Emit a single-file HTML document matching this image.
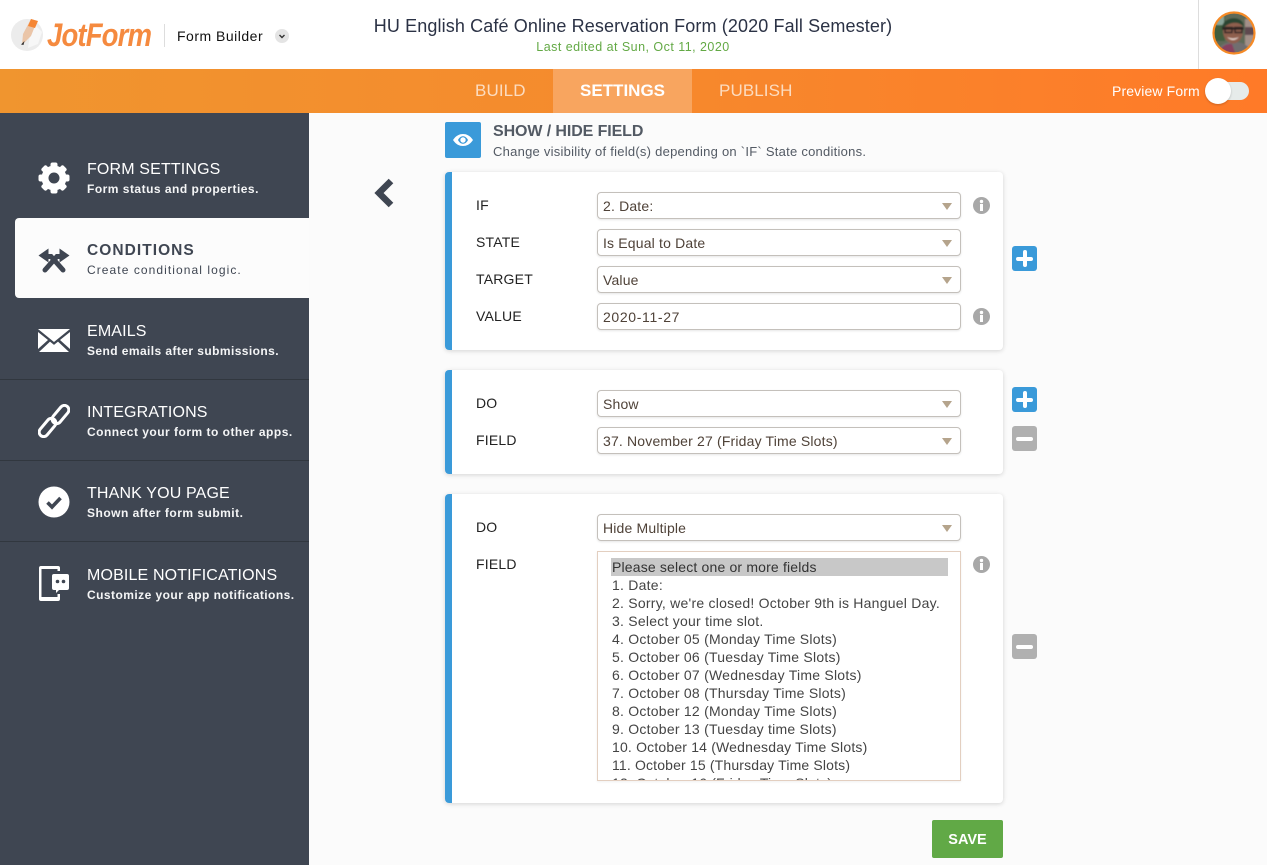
<!DOCTYPE html>
<html><head><meta charset="utf-8"><style>
html,body{margin:0;padding:0}
body{width:1267px;height:865px;position:relative;overflow:hidden;background:#fbfbfb;font-family:"Liberation Sans",sans-serif;color:#333}
.a{position:absolute;white-space:nowrap}
.card{position:absolute;left:445px;width:558px;background:#fff;border-radius:4px;box-shadow:0 1px 5px rgba(0,0,0,.16)}
.bar{position:absolute;left:445px;width:7px;background:#3a9ad9;border-radius:4px 0 0 4px}
.f{position:absolute;left:597px;width:364px;height:27px;box-sizing:border-box;background:#fff;border:1px solid #c4c0bb;border-radius:4px;box-shadow:0 1px 2px rgba(0,0,0,.1);font-size:14px;letter-spacing:.17px;line-height:27px;padding-left:5px;color:#4f4238}
.f.s:after{content:"";position:absolute;right:8px;top:10px;border-left:5px solid transparent;border-right:5px solid transparent;border-top:7px solid #b5a48c}
.l{position:absolute;left:476px;font-size:14px;letter-spacing:.2px;line-height:20px;color:#222}
.i{position:absolute;left:973px}
.b{position:absolute;left:1012px;width:25px;height:25px;border-radius:3px}
.b.p{background:#3a9ad9}.b.m{background:#b0b0b0}
.b:before{content:"";position:absolute;left:4px;top:10.5px;width:17px;height:4px;background:#fff;border-radius:2px}
.b.p:after{content:"";position:absolute;left:10.5px;top:4px;width:4px;height:17px;background:#fff;border-radius:2px}
.nt{position:absolute;left:87px;font-size:16px;letter-spacing:.15px;line-height:20px;color:#fff;white-space:nowrap}
.ns{position:absolute;left:87px;font-size:12px;font-weight:bold;letter-spacing:.49px;line-height:16px;color:#f4f5f6;white-space:nowrap}
.o{position:absolute;left:613px;font-size:14px;letter-spacing:.24px;line-height:18px;color:#444;white-space:nowrap}
.sep{position:absolute;left:0;width:309px;height:1px;background:#31373f}
</style></head><body>
<div class="a" style="left:0;top:0;width:1267px;height:69px;background:#fff"></div>
<svg class="a" style="left:10px;top:18px" width="34" height="34" viewBox="0 0 34 34"><circle cx="17" cy="17" r="16" fill="#ececec"/><path d="M22 4 32 14 28 26 18 30Z" fill="#f7f7f7"/><path d="M21 1 27 3 21 18 12 27 13 16Z" fill="#eac5a8"/><path d="M21 1 28 3 25 10 18 8Z" fill="#f58634"/><path d="M13.5 23 12.5 27 10 26.5Z" fill="#333" transform="translate(1 0)"/></svg>
<div class="a" style="left:47px;top:14px;font-size:32px;line-height:42px;font-weight:bold;font-style:italic;color:#f58a3f;letter-spacing:-1px;transform:scaleX(.86);transform-origin:0 0">JotForm</div>
<div class="a" style="left:164px;top:24px;width:1px;height:23px;background:#ddd"></div>
<div class="a" style="left:177px;top:26px;font-size:14px;line-height:20px;letter-spacing:.5px;color:#111">Form Builder</div>
<div class="a" style="left:275px;top:29px;width:14px;height:14px;border-radius:50%;background:#e4e4e4"></div>
<svg class="a" style="left:275px;top:29px" width="14" height="14"><path d="M4.500 6 7 8.500 9.500 6" fill="none" stroke="#333" stroke-width="1.400"/></svg>
<div class="a" style="left:334px;top:15px;width:598px;text-align:center;font-size:18px;line-height:22px;color:#2b3245;letter-spacing:.12px">HU English Café Online Reservation Form (2020 Fall Semester)</div>
<div class="a" style="left:334px;top:39px;width:598px;text-align:center;font-size:12.500px;line-height:16px;color:#63a945;letter-spacing:.47px">Last edited at Sun, Oct 11, 2020</div>
<div class="a" style="left:1198px;top:0;width:1px;height:69px;background:#ddd"></div>
<svg class="a" style="left:1212px;top:11px" width="44" height="44" viewBox="0 0 44 44"><defs><clipPath id="c"><circle cx="22" cy="22" r="20"/></clipPath><filter id="bl"><feGaussianBlur stdDeviation=".7"/></filter></defs><g clip-path="url(#c)"><g filter="url(#bl)"><rect width="44" height="44" fill="#5f6a58"/><rect x="0" y="0" width="13" height="30" fill="#3f5b3c"/><rect x="4" y="4" width="8" height="10" fill="#8aa59a"/><rect x="33" y="8" width="11" height="28" fill="#a39089"/><rect x="33" y="16" width="11" height="8" fill="#5e4a50"/><path d="M4 44C6 34 14 31 22 31S38 34 40 44Z" fill="#716e70"/><path d="M6 44C8 36 14 32 20 33L24 44Z" fill="#87405f"/><ellipse cx="21" cy="20" rx="10" ry="12.500" fill="#8f5f4d"/><path d="M10 18C9 5 32 3 32 16 27 10 18 10 10 18Z" fill="#2b4530"/><path d="M13 16.500h7v5h-7zM23 16.500h7v5h-7zM11 17h20v1H11z" fill="none" stroke="#2a2023" stroke-width="1.400"/><path d="M15 26q6 3 12 0q-6 6-12 0" fill="#ead8d0"/></g></g><circle cx="22" cy="22" r="20.500" fill="none" stroke="#f58a26" stroke-width="2.200"/></svg>
<div class="a" style="left:0;top:69px;width:1267px;height:44px;background:linear-gradient(90deg,#f0952f 0%,#f58b2d 45%,#ff7a28 100%)"></div>
<div class="a" style="left:553px;top:69px;width:139px;height:44px;background:#f8a55f"></div>
<div class="a" style="left:475px;top:81px;font-size:17px;line-height:20px;color:#fcdcc0;letter-spacing:.1px">BUILD</div>
<div class="a" style="left:580px;top:81px;font-size:17px;line-height:20px;color:#fff;letter-spacing:0;font-weight:bold">SETTINGS</div>
<div class="a" style="left:719px;top:81px;font-size:17px;line-height:20px;color:#fcdcc0;letter-spacing:.1px">PUBLISH</div>
<div class="a" style="left:1112px;top:81px;font-size:14px;line-height:20px;color:#fff;letter-spacing:.12px">Preview Form</div>
<div class="a" style="left:1207px;top:82px;width:42px;height:18px;border-radius:9px;background:#e6ebea"></div>
<div class="a" style="left:1205px;top:78px;width:26px;height:26px;border-radius:50%;background:#fff;box-shadow:0 1px 2px rgba(0,0,0,.2)"></div>

<div class="a" style="left:0;top:113px;width:309px;height:752px;background:#3f4652"></div>
<div class="a" style="left:15px;top:218px;width:294px;height:80px;background:#fcfcfc;border-radius:4px 0 0 4px"></div>
<div class="sep" style="top:379px"></div><div class="sep" style="top:460px"></div><div class="sep" style="top:541px"></div>

<svg class="a" style="left:38px;top:162px" width="32" height="32" viewBox="0 0 32 32"><g fill="#fff"><circle cx="16" cy="16" r="12.500"/><rect x="12.500" y=".5" width="7" height="31" rx="2"/><rect x="12.500" y=".5" width="7" height="31" rx="2" transform="rotate(45 16 16)"/><rect x="12.500" y=".5" width="7" height="31" rx="2" transform="rotate(90 16 16)"/><rect x="12.500" y=".5" width="7" height="31" rx="2" transform="rotate(135 16 16)"/></g><circle cx="16" cy="16" r="5.500" fill="#3f4652"/></svg>
<svg class="a" style="left:38px;top:246px" width="32" height="28" viewBox="0 0 32 28"><g fill="#3f4652"><path d="M.5 9.500 10.500 2.500v14zM31.500 9.500 21.500 2.500v14z"/></g><g fill="none" stroke="#3f4652" stroke-width="5" stroke-linecap="round"><path d="M7 24 19 10.500h4"/><path d="M25 24 13 10.500H9"/></g></svg>
<svg class="a" style="left:38px;top:328px" width="32" height="25" viewBox="0 0 32 25"><path fill="#fff" d="M0 1h32L16 14zM0 4l10 8L0 21zM32 4v17l-10-9zM12 13.600l4 3.300 4-3.300L31 24H1z"/></svg>
<svg class="a" style="left:38px;top:404px" width="32" height="34" viewBox="0 0 32 34"><g fill="none" stroke="#fff" stroke-width="3"><rect x="-1" y="19" width="21" height="9" rx="4.500" transform="rotate(-50 9.500 23.500)"/><rect x="12" y="6" width="21" height="9" rx="4.500" transform="rotate(-50 22.500 10.500)"/></g></svg>
<svg class="a" style="left:38px;top:486px" width="32" height="32" viewBox="0 0 32 32"><circle cx="16" cy="16" r="15.500" fill="#fff"/><path d="M9.500 16.500 14 21l8.500-9" fill="none" stroke="#3f4652" stroke-width="3.600"/></svg>
<svg class="a" style="left:38px;top:566px" width="32" height="35" viewBox="0 0 32 35"><path fill="#fff" d="M3 0h17a2 2 0 0 1 2 2v3h-2.500V3H3.500v28h16v-3H22v5a2 2 0 0 1-2 2H3a2 2 0 0 1-2-2V2a2 2 0 0 1 2-2z"/><path fill="#fff" d="M16 8h13a2 2 0 0 1 2 2v12a2 2 0 0 1-2 2H21l-3 3v-3h-2a2 2 0 0 1-2-2V10a2 2 0 0 1 2-2z"/><circle cx="19.500" cy="15.500" r="1.800" fill="#3f4652"/><circle cx="25.500" cy="15.500" r="1.800" fill="#3f4652"/></svg>

<div class="nt" style="top:160px">FORM SETTINGS</div><div class="ns" style="top:181px">Form status and properties.</div>
<div class="nt" style="top:241px;color:#3f4652;font-weight:bold;font-size:15.500px;letter-spacing:1.05px">CONDITIONS</div><div class="ns" style="top:262px;color:#3f4652;font-weight:normal;letter-spacing:1.07px">Create conditional logic.</div>
<div class="nt" style="top:322px">EMAILS</div><div class="ns" style="top:343px;letter-spacing:.42px">Send emails after submissions.</div>
<div class="nt" style="top:403px">INTEGRATIONS</div><div class="ns" style="top:424px">Connect your form to other apps.</div>
<div class="nt" style="top:484px">THANK YOU PAGE</div><div class="ns" style="top:505px">Shown after form submit.</div>
<div class="nt" style="top:566px">MOBILE NOTIFICATIONS</div><div class="ns" style="top:587px;letter-spacing:.45px">Customize your app notifications.</div>

<svg class="a" style="left:372px;top:177px" width="24" height="32" viewBox="0 0 24 32"><path d="M19 4 7 16l12 12" fill="none" stroke="#3f4652" stroke-width="6.500"/></svg>

<div class="a" style="left:445px;top:122px;width:36px;height:36px;background:#3a9ad9;border-radius:2px"></div>
<svg class="a" style="left:452px;top:131px" width="22" height="18" viewBox="0 0 22 18"><path fill="#fff" fill-rule="evenodd" d="M1 9C4 4.500 7.500 3 11 3s7 1.500 10 6c-3 4.500-6.500 6-10 6S4 13.500 1 9zm5 0c1.200 2.500 3 3.800 5 3.800s3.800-1.300 5-3.800c-1.200-2.500-3-3.800-5-3.800S7.200 6.500 6 9z"/><circle cx="11" cy="9" r="2.700" fill="#fff"/></svg>
<div class="a" style="left:493px;top:122px;font-size:16px;line-height:20px;font-weight:bold;color:#535a64;letter-spacing:-.1px">SHOW / HIDE FIELD</div>
<div class="a" style="left:493px;top:143px;font-size:13px;line-height:18px;color:#535a64;letter-spacing:.25px">Change visibility of field(s) depending on `IF` State conditions.</div>

<div class="card" style="top:172px;height:178px"></div><div class="bar" style="top:172px;height:178px"></div>
<div class="card" style="top:370px;height:104px"></div><div class="bar" style="top:370px;height:104px"></div>
<div class="card" style="top:494px;height:309px"></div><div class="bar" style="top:494px;height:309px"></div>

<div class="l" style="top:195px">IF</div><div class="f s" style="top:192px">2. Date:</div>
<div class="l" style="top:232px">STATE</div><div class="f s" style="top:229px">Is Equal to Date</div>
<div class="l" style="top:269px">TARGET</div><div class="f s" style="top:266px">Value</div>
<div class="l" style="top:306px">VALUE</div><div class="f" style="top:303px;letter-spacing:.65px">2020-11-27</div>
<div class="l" style="top:393px">DO</div><div class="f s" style="top:390px">Show</div>
<div class="l" style="top:430px">FIELD</div><div class="f s" style="top:427px">37. November 27 (Friday Time Slots)</div>
<div class="l" style="top:517px">DO</div><div class="f s" style="top:514px">Hide Multiple</div>
<div class="l" style="top:554px">FIELD</div>

<div class="a" style="left:597px;top:551px;width:364px;height:230px;box-sizing:border-box;background:#fff;border:1px solid #e3cfc0;overflow:hidden;box-shadow:0 1px 2px rgba(0,0,0,.06)">
<div class="a" style="left:13px;top:6px;width:337px;height:18px;background:#c8c8c8"></div>
<div class="o" style="left:14px;top:6px;color:#333;letter-spacing:.17px">Please select one or more fields</div>
<div class="o" style="left:14px;top:24px">1. Date:</div>
<div class="o" style="left:14px;top:42px">2. Sorry, we're closed! October 9th is Hanguel Day.</div>
<div class="o" style="left:14px;top:60px">3. Select your time slot.</div>
<div class="o" style="left:14px;top:78px">4. October 05 (Monday Time Slots)</div>
<div class="o" style="left:14px;top:96px">5. October 06 (Tuesday Time Slots)</div>
<div class="o" style="left:14px;top:114px">6. October 07 (Wednesday Time Slots)</div>
<div class="o" style="left:14px;top:132px">7. October 08 (Thursday Time Slots)</div>
<div class="o" style="left:14px;top:150px">8. October 12 (Monday Time Slots)</div>
<div class="o" style="left:14px;top:168px">9. October 13 (Tuesday time Slots)</div>
<div class="o" style="left:14px;top:186px;letter-spacing:.18px">10. October 14 (Wednesday Time Slots)</div>
<div class="o" style="left:14px;top:204px;letter-spacing:.16px">11. October 15 (Thursday Time Slots)</div>
<div class="o" style="left:14px;top:222px;letter-spacing:.18px">12. October 16 (Friday Time Slots)</div>
</div>

<svg class="i" style="top:197px" width="17" height="17" viewBox="0 0 17 17"><circle cx="8.500" cy="8.500" r="8.500" fill="#a8a8a8"/><rect x="7" y="7" width="3" height="7" fill="#fff"/><circle cx="8.500" cy="4.500" r="1.700" fill="#fff"/></svg>
<svg class="i" style="top:308px" width="17" height="17" viewBox="0 0 17 17"><circle cx="8.500" cy="8.500" r="8.500" fill="#a8a8a8"/><rect x="7" y="7" width="3" height="7" fill="#fff"/><circle cx="8.500" cy="4.500" r="1.700" fill="#fff"/></svg>
<svg class="i" style="top:556px" width="17" height="17" viewBox="0 0 17 17"><circle cx="8.500" cy="8.500" r="8.500" fill="#a8a8a8"/><rect x="7" y="7" width="3" height="7" fill="#fff"/><circle cx="8.500" cy="4.500" r="1.700" fill="#fff"/></svg>

<div class="b p" style="top:246px"></div>
<div class="b p" style="top:387px"></div>
<div class="b m" style="top:426px"></div>
<div class="b m" style="top:634px"></div>

<div class="a" style="left:932px;top:820px;width:71px;height:38px;background:#61a946;border-radius:2px;color:#fff;font-size:14.500px;font-weight:bold;line-height:40px;text-align:center">SAVE</div>
</body></html>
